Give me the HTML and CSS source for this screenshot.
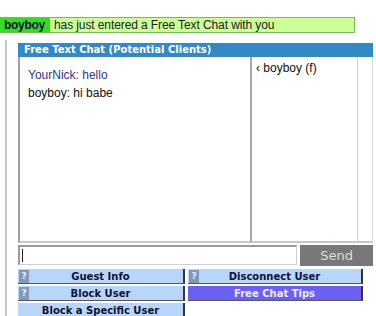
FILE: index.html
```html
<!DOCTYPE html>
<html lang="en">
<head>
  <meta charset="UTF-8" />
  <title>Free Text Chat</title>
  <link rel="stylesheet" href="styles.css">
</head>
<body>

  <!-- Entry notice -->
  <div class="notice">
    <span class="notice-nick">boyboy</span>
    <span class="notice-msg">has just entered a Free Text Chat with you</span>
  </div>

  <div class="frame">
    <!-- Chat panel -->
    <div class="panel">
      <div class="panel-title">Free Text Chat (Potential Clients)</div>
      <div class="panel-body">
        <div class="chat-log">
          <div class="line line-me">YourNick: hello</div>
          <div class="line">boyboy: hi babe</div>
        </div>
        <div class="user-list">
          <div class="user">&lsaquo; boyboy (f)</div>
        </div>
        <div class="scroll-col"></div>
      </div>
    </div>

    <!-- Message input -->
    <div class="compose">
      <div class="compose-input"><span class="caret"></span></div>
      <button class="send-btn">Send</button>
    </div>

    <!-- Actions -->
    <div class="actions">
      <div class="action"><span class="help">?</span><span class="action-label">Guest Info</span></div>
      <div class="action"><span class="help">?</span><span class="action-label">Disconnect User</span></div>
      <div class="action"><span class="help">?</span><span class="action-label">Block User</span></div>
      <div class="action action-tips"><span class="action-label">Free Chat Tips</span></div>
      <div class="action"><span class="action-label">Block a Specific User</span></div>
    </div>
  </div>

</body>
</html>
```

FILE: styles.css
```css
/* Global */
body {
  margin: 0;
  padding: 0;
  background-color: #ffffff;
  font-family: 'Liberation Sans', Arial, sans-serif;
  overflow: hidden;
}

/* Entry notice */
.notice {
  display: flex;
  align-items: center;
  width: 354px;
  height: 14px;
  margin-top: 17px;
  background-color: #ccff99;
  border: 1px solid #77bb55;
  border-left: none;
  font-size: 12px;
}

.notice-nick {
  display: flex;
  align-items: center;
  height: 100%;
  width: 46px;
  padding-left: 4px;
  background-color: #33dd22;
  color: #111133;
  font-weight: bold;
  letter-spacing: -0.3px;
}

.notice-msg {
  padding-left: 4px;
  color: #222222;
  letter-spacing: -0.1px;
}

/* Frame with left rule */
.frame {
  margin-left: 5px;
  margin-top: 7px;
  padding-top: 3px;
  padding-left: 11px;
  border-left: 2px solid #b9cad8;
  height: 273px;
  overflow: hidden;
}

/* Chat panel */
.panel {
  width: 355px;
}

.panel-title {
  height: 14px;
  line-height: 13px;
  padding-left: 6px;
  background-color: #3389c6;
  color: #ffffff;
  font-family: Verdana, 'DejaVu Sans', sans-serif;
  font-size: 10px;
  font-weight: bold;
}

.panel-body {
  display: flex;
  height: 186px;
}

.chat-log {
  width: 222px;
  padding: 11px 0 0 8px;
  border-left: 2px solid #a0a0a0;
  border-bottom: 2px solid #c8c8c8;
  font-size: 12px;
}

.line {
  height: 18px;
  color: #111111;
}

.line-me {
  color: #333388;
}

.user-list {
  width: 101px;
  padding: 4px 0 0 4px;
  border-left: 2px solid #a8a8a8;
  border-bottom: 2px solid #c8c8c8;
  font-size: 12px;
  color: #111111;
}

.scroll-col {
  flex: 1;
  border-left: 1px solid #cfcfcf;
  border-right: 1px solid #dcdcdc;
  border-bottom: 2px solid #c8c8c8;
}

/* Message input */
.compose {
  display: flex;
  gap: 3px;
  margin-top: 2px;
  width: 355px;
}

.compose-input {
  width: 276px;
  height: 17px;
  border: 1px solid #d0d0d0;
  border-top: 2px solid #9a9a9a;
  border-left: 2px solid #9a9a9a;
  background-color: #ffffff;
  display: flex;
  align-items: center;
  padding-left: 2px;
}

.caret {
  width: 1px;
  height: 13px;
  background-color: #222222;
}

.send-btn {
  width: 73px;
  height: 21px;
  border: none;
  background-color: #787878;
  color: #dddddd;
  font-family: Verdana, 'DejaVu Sans', sans-serif;
  font-size: 13px;
  padding: 0;
}

/* Actions */
.actions {
  display: grid;
  grid-template-columns: 167px 175px;
  column-gap: 3px;
  row-gap: 2px;
  margin-top: 3px;
}

.action {
  position: relative;
  display: flex;
  align-items: center;
  justify-content: center;
  height: 14px;
  background-color: #b8d5fa;
  border-right: 2px solid #333344;
  border-bottom: 1px solid #555566;
  font-family: Verdana, 'DejaVu Sans', sans-serif;
  font-size: 10px;
  font-weight: bold;
  color: #111133;
}

.action-tips {
  background-color: #6d5ff2;
  color: #eeeeff;
}

.help {
  position: absolute;
  left: 1px;
  top: 1px;
  width: 10px;
  height: 13px;
  background-color: #7f9bb8;
  color: #e8f0ff;
  font-size: 9px;
  line-height: 13px;
  text-align: center;
}
```
